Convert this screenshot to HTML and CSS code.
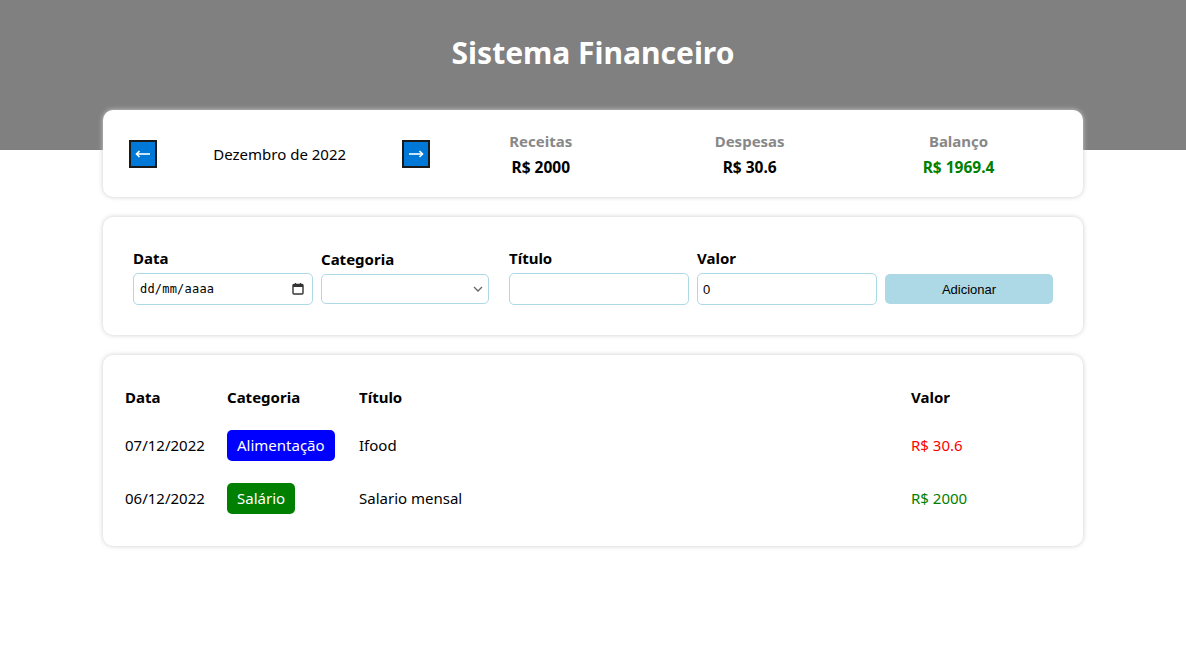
FILE: index.html
```html
<!DOCTYPE html>
<html lang="pt-BR">
<head>
<meta charset="utf-8">
<title>Sistema Financeiro</title>
<link rel="stylesheet" href="styles.css">
</head>
<body>
<header class="header">
  <h1 class="header-title">Sistema Financeiro</h1>
</header>
<main class="body">
  <section class="card info-area">
    <div class="month-area">
      <div class="month-arrow">
        <span class="arrow-box">
          <svg width="18" height="10" viewBox="0 0 18 10"><path d="M2.5 5H16" stroke="#fff" stroke-width="1.6" fill="none"/><path d="M5.5 2L2.5 5l3 3" stroke="#fff" stroke-width="1.6" fill="none"/></svg>
        </span>
      </div>
      <div class="month-title">Dezembro de 2022</div>
      <div class="month-arrow">
        <span class="arrow-box">
          <svg width="18" height="10" viewBox="0 0 18 10"><path d="M2 5H15.5" stroke="#fff" stroke-width="1.6" fill="none"/><path d="M12.5 2l3 3-3 3" stroke="#fff" stroke-width="1.6" fill="none"/></svg>
        </span>
      </div>
    </div>
    <div class="resume-area">
      <div class="resume-item">
        <div class="resume-title">Receitas</div>
        <div class="resume-info">R$ 2000</div>
      </div>
      <div class="resume-item">
        <div class="resume-title">Despesas</div>
        <div class="resume-info">R$ 30.6</div>
      </div>
      <div class="resume-item">
        <div class="resume-title">Balanço</div>
        <div class="resume-info positive">R$ 1969.4</div>
      </div>
    </div>
  </section>

  <section class="card input-area">
    <label class="input-label">
      <div class="input-title">Data</div>
      <div class="input fake-date">
        <span class="date-text">dd/mm/aaaa</span>
        <svg class="cal-icon" width="12" height="12" viewBox="0 0 12 12"><rect x="1" y="1.5" width="10" height="9.5" rx="1" fill="none" stroke="#333" stroke-width="1.4"/><rect x="1" y="1.5" width="10" height="2.5" fill="#333"/><path d="M3.5 0v2M8.5 0v2" stroke="#333" stroke-width="1.2"/></svg>
      </div>
    </label>
    <label class="input-label">
      <div class="input-title">Categoria</div>
      <div class="select-wrap">
        <select class="select">
          <option></option>
        </select>
        <svg class="select-chevron" width="10" height="6" viewBox="0 0 10 6"><path d="M1 1l4 4 4-4" stroke="#666" stroke-width="1.3" fill="none"/></svg>
      </div>
    </label>
    <label class="input-label">
      <div class="input-title">Título</div>
      <input class="input" type="text">
    </label>
    <label class="input-label">
      <div class="input-title">Valor</div>
      <input class="input" type="text" value="0">
    </label>
    <label class="input-label">
      <div class="input-title">&nbsp;</div>
      <button class="button" type="button">Adicionar</button>
    </label>
  </section>

  <section class="card table-area">
    <table class="table">
      <thead>
        <tr>
          <th class="col-date">Data</th>
          <th class="col-cat">Categoria</th>
          <th>Título</th>
          <th class="col-value">Valor</th>
        </tr>
      </thead>
      <tbody>
        <tr>
          <td>07/12/2022</td>
          <td><span class="category cat-blue">Alimentação</span></td>
          <td>Ifood</td>
          <td class="negative">R$ 30.6</td>
        </tr>
        <tr>
          <td>06/12/2022</td>
          <td><span class="category cat-green">Salário</span></td>
          <td>Salario mensal</td>
          <td class="positive">R$ 2000</td>
        </tr>
      </tbody>
    </table>
  </section>
</main>
</body>
</html>
```

FILE: styles.css
```css
* {
  box-sizing: border-box;
}

body {
  margin: 0;
  font-family: "Noto Sans", "Open Sans", sans-serif;
  font-size: 15px;
  color: #000;
  background: #fff;
}

.header {
  background: #808080;
  height: 150px;
  text-align: center;
}

.header-title {
  margin: 0;
  padding-top: 30px;
  line-height: 46px;
  font-size: 30px;
  font-weight: 700;
  color: #fff;
}

.body {
  width: 980px;
  margin: -40px auto 0;
}

.card {
  background: #fff;
  border-radius: 10px;
  box-shadow: 0 0 5px #ccc;
  padding: 20px;
  margin-bottom: 20px;
}

/* Info area */
.info-area {
  display: flex;
  align-items: center;
  height: 87px;
}

.month-area {
  flex: 1;
  display: flex;
  align-items: center;
}

.month-arrow {
  width: 40px;
  display: flex;
  justify-content: center;
}

.arrow-box {
  width: 28px;
  height: 28px;
  background: #0078d7;
  border: 2px solid #1a1a1a;
  display: flex;
  align-items: center;
  justify-content: center;
}

.month-title {
  flex: 1;
  text-align: center;
  font-size: 15px;
}

.resume-area {
  flex: 2;
  display: flex;
}

.resume-item {
  flex: 1;
  text-align: center;
}

.resume-title {
  color: #888;
  font-weight: 700;
  font-size: 15px;
  line-height: 22px;
  margin-bottom: 4px;
}

.resume-info {
  font-weight: 700;
  font-size: 15.5px;
  line-height: 22px;
}

.positive {
  color: #008000;
}

.negative {
  color: #ff0000;
}

/* Input area */
.input-area {
  display: flex;
  align-items: center;
  padding: 30px 30px;
}

.input-label {
  flex: 1;
  display: block;
  margin-right: 20px;
}

.input-label:last-child {
  margin-right: 0;
}

.input-title {
  font-weight: 700;
  font-size: 15px;
  line-height: 22px;
  margin-bottom: 4px;
}

.input {
  display: block;
  width: calc(100% + 12px);
  height: 32px;
  padding: 0 5px;
  border: 1px solid #add8e6;
  border-radius: 5px;
  background: #fff;
  font-family: "Liberation Sans", Arial, sans-serif;
  font-size: 13px;
  color: #000;
  outline: none;
}

.fake-date {
  display: flex;
  align-items: center;
  justify-content: space-between;
  padding: 0 8px 0 6px;
}

.date-text {
  font-family: "DejaVu Sans Mono", monospace;
  font-size: 12px;
  letter-spacing: 0.2px;
}

.cal-icon {
  display: block;
}

.select-wrap {
  position: relative;
}

.select {
  display: block;
  width: 100%;
  height: 30px;
  border: 1px solid #add8e6;
  border-radius: 5px;
  background: #fff;
  font-family: "Liberation Sans", Arial, sans-serif;
  font-size: 13px;
  outline: none;
  appearance: none;
  -webkit-appearance: none;
}

.select-chevron {
  position: absolute;
  right: 6px;
  top: 12px;
  pointer-events: none;
}

.button {
  display: block;
  width: 100%;
  height: 30px;
  border: 0;
  border-radius: 5px;
  background: #add8e6;
  font-family: "Liberation Sans", Arial, sans-serif;
  font-size: 13px;
  color: #000;
}

/* Table */
.table {
  width: 100%;
  border-spacing: 2px;
}

.table th {
  text-align: left;
  font-weight: 700;
  font-size: 15px;
  line-height: 22px;
  padding: 9px 0 10px 0;
}

.table td {
  font-size: 15px;
  padding: 10px 0;
  line-height: 31px;
}

.col-date {
  width: 100px;
}

.col-cat {
  width: 130px;
}

.col-value {
  width: 150px;
}

.category {
  display: inline-block;
  padding: 0 10px;
  border-radius: 5px;
  color: #fff;
  line-height: 31px;
}

.cat-blue {
  background: #0000ff;
}

.cat-green {
  background: #008000;
}
```
